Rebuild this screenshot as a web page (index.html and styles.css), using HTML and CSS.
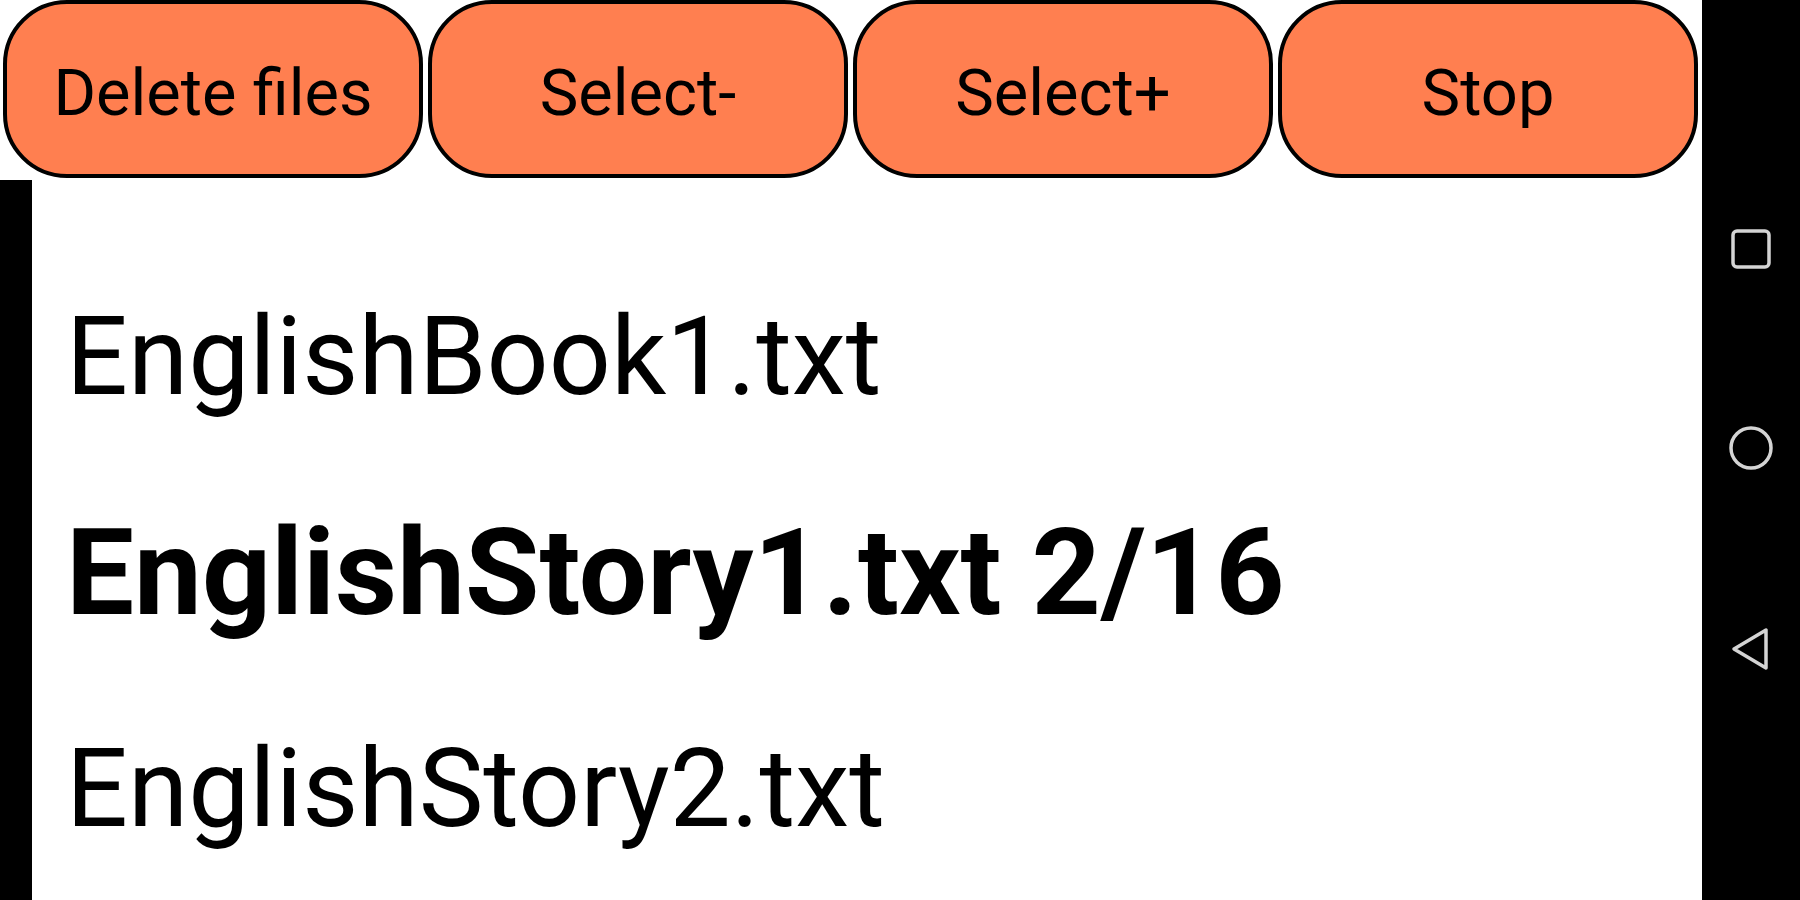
FILE: index.html
```html
<!DOCTYPE html>
<html lang="en">
  <head>
    <meta charset="UTF-8" />
    <meta name="viewport" content="width=device-width, initial-scale=1.0" />
    <title>Text reader</title>
    <link rel="stylesheet" href="styles.css">
  </head>

  <body>
    <div class="screen">
      <div class="toolbar">
        <button class="btn">Delete files</button>
        <button class="btn">Select-</button>
        <button class="btn">Select+</button>
        <button class="btn">Stop</button>
      </div>
      <div class="file_list">
        <div class="file">EnglishBook1.txt</div>
        <div class="file current">EnglishStory1.txt 2/16</div>
        <div class="file">EnglishStory2.txt</div>
      </div>
    </div>

    <div class="navbar">
      <svg class="nav_icon" width="44" height="44" viewBox="0 0 44 44">
        <rect x="4" y="4" width="36" height="36" rx="4" fill="none" stroke="#d4d4d4" stroke-width="3.5" />
      </svg>
      <svg class="nav_icon" width="48" height="48" viewBox="0 0 48 48">
        <circle cx="24" cy="24" r="20" fill="none" stroke="#d4d4d4" stroke-width="3.5" />
      </svg>
      <svg class="nav_icon" width="46" height="48" viewBox="0 0 46 48">
        <path d="M38 5 L38 43 L6 24 Z" fill="none" stroke="#d4d4d4" stroke-width="3.5" stroke-linejoin="round" />
      </svg>
    </div>
  </body>
</html>
```

FILE: styles.css
```css
body {
  margin: 0;
  display: flex;
  height: 100vh;
  overflow: hidden;
  background-color: #ffffff;
  font-family: Roboto, "Liberation Sans", sans-serif;
}

.screen {
  flex: 1;
  display: flex;
  flex-direction: column;
}

.toolbar {
  display: flex;
  gap: 5px;
  height: 180px;
  padding: 0 4px 0 3px;
}

.btn {
  flex: 1;
  height: 178px;
  padding: 8px 0 0 0;
  border: 4px solid #000000;
  border-radius: 64px;
  background-color: #ff7f50;
  color: #000000;
  font-family: Roboto, "Liberation Sans", sans-serif;
  font-size: 65px;
  cursor: pointer;
}

.file_list {
  flex: 1;
  border-left: 32px solid #000000;
  padding: 69px 0 0 34px;
}

.file {
  height: 216px;
  line-height: 216px;
  font-size: 109px;
  color: #000000;
  white-space: nowrap;
}

.current {
  font-size: 121px;
  font-weight: 700;
}

.navbar {
  width: 98px;
  display: flex;
  flex-direction: column;
  align-items: center;
  justify-content: center;
  gap: 153px;
  background-color: #000000;
}
```
